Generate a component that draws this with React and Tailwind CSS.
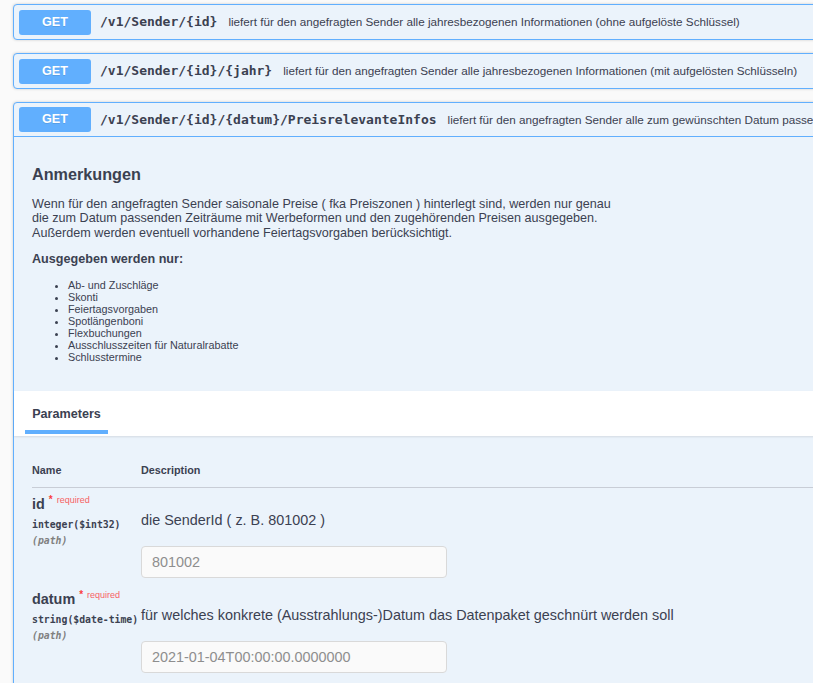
import React from 'react';

const OPERATIONS = [
  {
    path: '/v1/Sender/{id}',
    summary: 'liefert für den angefragten Sender alle jahresbezogenen Informationen (ohne aufgelöste Schlüssel)',
  },
  {
    path: '/v1/Sender/{id}/{jahr}',
    summary: 'liefert für den angefragten Sender alle jahresbezogenen Informationen (mit aufgelösten Schlüsseln)',
  },
];

const OUTPUT_ITEMS = [
  'Ab- und Zuschläge',
  'Skonti',
  'Feiertagsvorgaben',
  'Spotlängenboni',
  'Flexbuchungen',
  'Ausschlusszeiten für Naturalrabatte',
  'Schlusstermine',
];

const PARAMS = [
  {
    name: 'id',
    type: 'integer($int32)',
    description: 'die SenderId ( z. B. 801002 )',
    placeholder: '801002',
  },
  {
    name: 'datum',
    type: 'string($date-time)',
    description: 'für welches konkrete (Ausstrahlungs-)Datum das Datenpaket geschnürt werden soll',
    placeholder: '2021-01-04T00:00:00.0000000',
  },
];

function OpSummary({ path, summary, open }) {
  return (
    <div className={`flex items-center h-[34px] pl-[5px] ${open ? 'border-b border-[#61affe]' : ''}`}>
      <span className="shrink-0 flex items-center justify-center w-[72px] h-[25px] rounded-[3px] bg-[#61affe] text-white text-[12.6px] font-bold [text-shadow:0_1px_0_rgba(0,0,0,0.1)]">
        GET
      </span>
      <span className="shrink-0 ml-[9px] font-['DejaVu_Sans_Mono',monospace] text-[13px] font-bold whitespace-nowrap">
        {path}
      </span>
      <span className="shrink-0 ml-[11px] text-[11.7px] whitespace-nowrap">{summary}</span>
    </div>
  );
}

function ParamRow({ name, type, description, placeholder }) {
  return (
    <div className="grid grid-cols-[109px_1fr] pt-[8px] pb-[5px]">
      <div>
        <div className="text-[14.4px] leading-[17px] font-bold whitespace-nowrap">
          {name}
          <span className="align-super leading-[0] text-[10px] text-[#f93e3e] px-[4px]">*</span>
          <span className="align-super leading-[0] text-[9px] font-normal text-[#f76164]">required</span>
        </div>
        <div className="mt-[5px] font-['DejaVu_Sans_Mono',monospace] text-[9.8px] leading-[13px] font-bold whitespace-nowrap">
          {type}
        </div>
        <div className="mt-[3px] font-['DejaVu_Sans_Mono',monospace] text-[9.8px] leading-[13px] font-bold italic text-[#808080]">
          (path)
        </div>
      </div>
      <div className="pt-[16px]">
        <p className="text-[14.4px] leading-[17px] whitespace-nowrap">{description}</p>
        <input
          readOnly
          placeholder={placeholder}
          className="mt-[17px] block w-[306px] h-[32px] px-[10px] rounded-[4px] border border-[#d9d9d9] bg-[#fafafa] text-[14.4px] placeholder:text-[#8e8e8e] outline-none"
        />
      </div>
    </div>
  );
}

export default function App() {
  return (
    <div className="w-[813px] h-[683px] overflow-hidden bg-[#fafafa] text-[#3b4151] font-['Liberation_Sans',Arial,sans-serif]">
      <div className="w-[900px] pt-[4px] pl-[13px]">
        {OPERATIONS.map((op) => (
          <div
            key={op.path}
            className="mb-[13px] rounded-[4px] border border-[#61affe] bg-[#ebf3fb] shadow-[0_0_3px_rgba(0,0,0,0.19)]"
          >
            <OpSummary path={op.path} summary={op.summary} />
          </div>
        ))}

        {/* expanded operation */}
        <div className="rounded-[4px] border border-[#61affe] bg-[#ebf3fb] shadow-[0_0_3px_rgba(0,0,0,0.19)]">
          <OpSummary
            open
            path="/v1/Sender/{id}/{datum}/PreisrelevanteInfos"
            summary="liefert für den angefragten Sender alle zum gewünschten Datum passenden preisrelevanten Informationen"
          />

          <div className="px-[18px] pt-[28px] pb-[28px]">
            <h2 className="text-[16.2px] leading-[19px] font-bold">Anmerkungen</h2>
            <p className="mt-[12.5px] text-[12.6px] leading-[14.5px] whitespace-nowrap">
              Wenn für den angefragten Sender saisonale Preise ( fka Preiszonen ) hinterlegt sind, werden nur genau
              <br />
              die zum Datum passenden Zeiträume mit Werbeformen und den zugehörenden Preisen ausgegeben.
              <br />
              Außerdem werden eventuell vorhandene Feiertagsvorgaben berücksichtigt.
            </p>
            <h4 className="mt-[12px] text-[12.6px] leading-[14.5px] font-bold">Ausgegeben werden nur:</h4>
            <ul className="mt-[12px] ml-[36px] list-disc text-[10.8px] leading-[12px]">
              {OUTPUT_ITEMS.map((item) => (
                <li key={item}>{item}</li>
              ))}
            </ul>
          </div>

          <div className="bg-white shadow-[0_1px_2px_rgba(0,0,0,0.1)] pl-[11px] pt-[16px] pb-[2px]">
            <div className="w-[83px] flex flex-col items-center">
              <h4 className="text-[12.6px] leading-[15px] font-bold">Parameters</h4>
              <div className="mt-[8px] h-[4px] w-full bg-[#61affe]" />
            </div>
          </div>

          <div className="px-[18px] pt-[28.5px] pb-[60px]">
            <div className="grid grid-cols-[109px_1fr] pb-[9.5px] border-b border-[#c8cdd6] text-[10.8px] leading-[13px] font-bold">
              <span>Name</span>
              <span>Description</span>
            </div>
            {PARAMS.map((p) => (
              <ParamRow key={p.name} {...p} />
            ))}
          </div>
        </div>
      </div>
    </div>
  );
}
